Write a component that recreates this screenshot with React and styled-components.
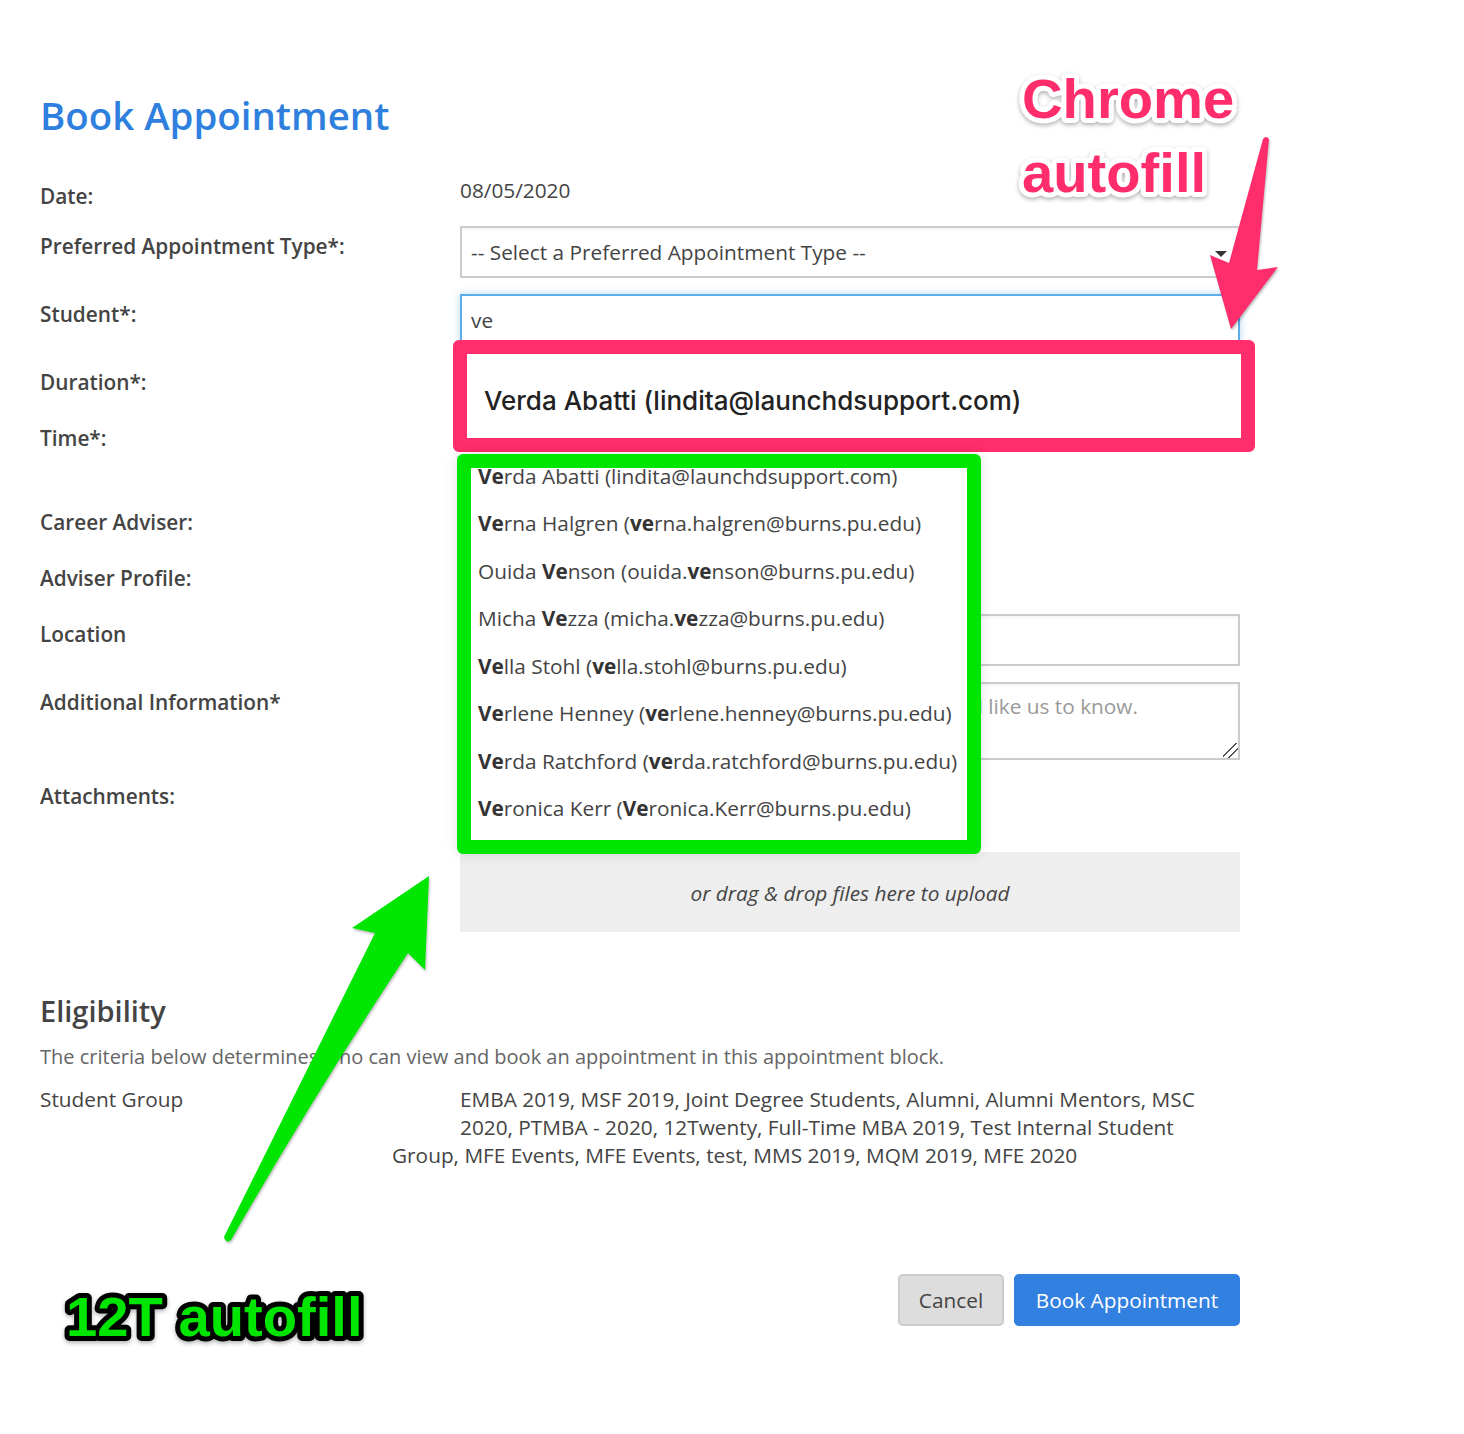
import React from "react";
import styled, { createGlobalStyle } from "styled-components";

const GlobalStyle = createGlobalStyle`
  html, body { margin: 0; padding: 0; background: #fff; }
  body { font-family: "Open Sans", "Liberation Sans", sans-serif; color: #444; }
  * { box-sizing: border-box; }
`;

const Page = styled.div`
  position: relative;
  width: 1464px;
  height: 1434px;
  padding: 89px 224px 0 40px;
  overflow: hidden;
  background: #fff;
  font-size: 20.8px;
  line-height: 28px;
`;

const Title = styled.h1`
  margin: 0 0 35px;
  font-size: 38.4px;
  line-height: 52px;
  font-weight: 600;
  color: #2f7fde;
`;

const Row = styled.div`
  display: grid;
  grid-template-columns: 420px 780px;
  height: ${(p) => p.$h}px;
`;

const Label = styled.div`
  padding-top: 6px;
  font-weight: 600;
  color: #444;
`;

const Value = styled.div`
  color: #444;
`;

const fieldBase = `
  display: block;
  width: 780px;
  border: 2px solid #ccc;
  background: #fff;
  font-family: "Open Sans", "Liberation Sans", sans-serif;
  font-size: 20.8px;
  line-height: 28px;
  color: #444;
  box-shadow: inset 0 2px 2px rgba(0, 0, 0, 0.04);
  outline: none;
`;

const Select = styled.div`
  ${fieldBase}
  position: relative;
  height: 52px;
  padding: 10px 9px;
  &::after {
    content: "";
    position: absolute;
    right: 11px;
    top: 23px;
    border-left: 6px solid transparent;
    border-right: 6px solid transparent;
    border-top: 6px solid #333;
  }
`;

const Input = styled.input`
  ${fieldBase}
  height: 52px;
  padding: 11px 9px;
  ${(p) =>
    p.$focus &&
    `
    border-color: #5dade8;
    box-shadow: 0 0 8px rgba(93, 173, 232, 0.45);
  `}
`;

const TextArea = styled.textarea`
  ${fieldBase}
  height: 78px;
  padding: 8px 9px 8px 14px;
  resize: vertical;
  &::placeholder { color: #999; opacity: 1; }
  &::-webkit-resizer {
    background: linear-gradient(
      135deg,
      transparent 0 43%,
      #555 43% 49%,
      transparent 49% 66%,
      #555 66% 72%,
      transparent 72%
    );
  }
`;

const DropZone = styled.div`
  height: 80px;
  margin-left: 420px;
  width: 780px;
  padding-top: 2px;
  display: flex;
  align-items: center;
  justify-content: center;
  background: #eee;
  font-style: italic;
  color: #444;
`;

const SectionTitle = styled.h2`
  margin: 59px 0 12px;
  font-size: 29px;
  line-height: 40px;
  font-weight: 600;
  color: #444;
`;

const Muted = styled.p`
  margin: 0 0 14px;
  font-size: 20px;
  color: #666;
`;

const GroupRow = styled.div`
  display: flex;
  height: 84px;
`;

const GroupLabel = styled.div`
  flex: 0 0 352px;
`;

const GroupValue = styled.div`
  flex: 0 0 848px;
  &::before {
    content: "";
    float: left;
    width: 68px;
    height: 56px;
  }
`;

const Actions = styled.div`
  display: flex;
  justify-content: flex-end;
  gap: 10px;
  margin-top: 105px;
`;

const Button = styled.button`
  height: 52px;
  width: ${(p) => (p.$primary ? 226 : 106)}px;
  padding: 0;
  border: 2px solid ${(p) => (p.$primary ? "#3280df" : "#ccc")};
  border-radius: 5px;
  background: ${(p) => (p.$primary ? "#3280df" : "#ddd")};
  color: ${(p) => (p.$primary ? "#fff" : "#444")};
  font-family: "Open Sans", "Liberation Sans", sans-serif;
  font-size: 20.8px;
`;

const ChromePopup = styled.div`
  position: absolute;
  left: 453px;
  top: 340px;
  width: 802px;
  height: 112px;
  padding: 32px 17px 0;
  border: 14px solid #ff2d6b;
  border-radius: 6px;
  background: #fff;
  font-family: Inter, "Liberation Sans", sans-serif;
  font-size: 26px;
  line-height: 30px;
  font-weight: 500;
  color: #222;
`;

const SuggestBox = styled.div`
  position: absolute;
  left: 457px;
  top: 454px;
  width: 524px;
  height: 400px;
  padding-left: 7px;
  border: 14px solid #00e600;
  border-radius: 6px;
  background: #fff;
  overflow: hidden;
  box-shadow: 0 0 14px rgba(0, 0, 0, 0.12);
`;

const SuggestList = styled.ul`
  margin: -15.5px 0 0;
  padding: 0;
  list-style: none;
`;

const SuggestItem = styled.li`
  height: 47.5px;
  line-height: 47.5px;
  white-space: nowrap;
  color: #444;
  b { font-weight: 700; color: #333; }
`;

const Drawing = styled.svg`
  position: absolute;
  left: 0;
  top: 0;
  pointer-events: none;
  path { filter: drop-shadow(1px 2px 1px rgba(0, 0, 0, 0.25)); }
`;

const Annotation = styled.text`
  font-family: "Liberation Sans", Arial, sans-serif;
  font-size: 56.2px;
  font-weight: 700;
  fill: ${(p) => p.$color};
  stroke: ${(p) => p.$outline};
  stroke-width: 10px;
  stroke-linejoin: round;
  paint-order: stroke fill;
  filter: drop-shadow(0 2px 2px rgba(0, 0, 0, 0.3));
`;

const people = [
  [["Ve", 1], ["rda Abatti (lindita@launchdsupport.com)", 0]],
  [["Ve", 1], ["rna Halgren (", 0], ["ve", 1], ["rna.halgren@burns.pu.edu)", 0]],
  [["Ouida ", 0], ["Ve", 1], ["nson (ouida.", 0], ["ve", 1], ["nson@burns.pu.edu)", 0]],
  [["Micha ", 0], ["Ve", 1], ["zza (micha.", 0], ["ve", 1], ["zza@burns.pu.edu)", 0]],
  [["Ve", 1], ["lla Stohl (", 0], ["ve", 1], ["lla.stohl@burns.pu.edu)", 0]],
  [["Ve", 1], ["rlene Henney (", 0], ["ve", 1], ["rlene.henney@burns.pu.edu)", 0]],
  [["Ve", 1], ["rda Ratchford (", 0], ["ve", 1], ["rda.ratchford@burns.pu.edu)", 0]],
  [["Ve", 1], ["ronica Kerr (", 0], ["Ve", 1], ["ronica.Kerr@burns.pu.edu)", 0]],
];

export default function App() {
  return (
    <Page>
      <GlobalStyle />
      <Title>Book Appointment</Title>

      <Row $h={50}>
        <Label>Date:</Label>
        <Value>08/05/2020</Value>
      </Row>
      <Row $h={68}>
        <Label>Preferred Appointment Type*:</Label>
        <Select>-- Select a Preferred Appointment Type --</Select>
      </Row>
      <Row $h={68}>
        <Label>Student*:</Label>
        <Input $focus readOnly value="ve" />
      </Row>
      <Row $h={56}>
        <Label>Duration*:</Label>
        <Value />
      </Row>
      <Row $h={84}>
        <Label>Time*:</Label>
        <Value />
      </Row>
      <Row $h={56}>
        <Label>Career Adviser:</Label>
        <Value />
      </Row>
      <Row $h={56}>
        <Label>Adviser Profile:</Label>
        <Value />
      </Row>
      <Row $h={68}>
        <Label>Location</Label>
        <Input readOnly value="" />
      </Row>
      <Row $h={94}>
        <Label>Additional Information*</Label>
        <TextArea readOnly placeholder="Please include any additional information you would like us to know." />
      </Row>
      <Row $h={76}>
        <Label>Attachments:</Label>
        <Value />
      </Row>
      <DropZone>or drag &amp; drop files here to upload</DropZone>

      <SectionTitle>Eligibility</SectionTitle>
      <Muted>The criteria below determines who can view and book an appointment in this appointment block.</Muted>
      <GroupRow>
        <GroupLabel>Student Group</GroupLabel>
        <GroupValue>
          EMBA 2019, MSF 2019, Joint Degree Students, Alumni, Alumni Mentors, MSC 2020, PTMBA - 2020, 12Twenty,
          Full-Time MBA 2019, Test Internal Student Group, MFE Events, MFE Events, test, MMS 2019, MQM 2019, MFE 2020
        </GroupValue>
      </GroupRow>

      <Actions>
        <Button>Cancel</Button>
        <Button $primary>Book Appointment</Button>
      </Actions>

      <ChromePopup>Verda Abatti (lindita@launchdsupport.com)</ChromePopup>
      <SuggestBox>
        <SuggestList>
          {people.map((parts, i) => (
            <SuggestItem key={i}>
              {parts.map(([text, bold], j) => (bold ? <b key={j}>{text}</b> : <span key={j}>{text}</span>))}
            </SuggestItem>
          ))}
        </SuggestList>
      </SuggestBox>

      <Drawing width="1464" height="1434" viewBox="0 0 1464 1434">
        <path
          d="M1263 139 Q1266 135 1269 139 L1257 270 L1278 267 L1231 329 L1210 255 L1229 263 Z"
          fill="#ff2d6b"
        />
        <path
          d="M224 1237 L375 933 L352 928 L429 876 L425 970 L408 953 Q316 1092 231 1240 Q226 1244 224 1237 Z"
          fill="#00e600"
        />
        <Annotation x="1022" y="118" $color="#ff2d6b" $outline="#fff">Chrome</Annotation>
        <Annotation x="1022" y="192" $color="#ff2d6b" $outline="#fff">autofill</Annotation>
        <Annotation x="66" y="1336" $color="#00e600" $outline="#000">12T autofill</Annotation>
      </Drawing>
    </Page>
  );
}
